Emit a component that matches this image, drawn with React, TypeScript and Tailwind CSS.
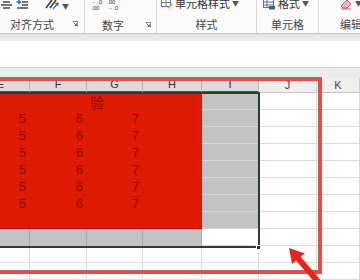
import React from "react";

const cjk = "font-['Noto_Sans_CJK_SC','Noto_Sans',sans-serif]";
const latin = "font-['Liberation_Sans','Noto_Sans_CJK_SC',sans-serif]";

interface colInterface {
  label: string;
  w: string;
  active: boolean;
}

const cols: colInterface[] = [
  { label: "E", w: "w-[30px]", active: true },
  { label: "F", w: "w-[57px]", active: true },
  { label: "G", w: "w-[56px]", active: true },
  { label: "H", w: "w-[59px]", active: true },
  { label: "I", w: "w-[57px]", active: true },
  { label: "J", w: "w-[58px]", active: false },
  { label: "K", w: "w-[43px]", active: false },
];

const Launcher = () => (
  <svg width="6" height="6" viewBox="0 0 6 6" className="shrink-0">
    <path d="M0.5 0.5 H5.5 V5.5" fill="none" stroke="#8a8a8a" strokeWidth="1" />
    <path d="M1.5 1.5 L4.5 4.5 M2.5 4.5 H4.5 V2.5" fill="none" stroke="#6b6b6b" strokeWidth="1" />
  </svg>
);

const Caret = () => <span className="text-[7px] text-[#555] leading-none">▼</span>;

// ribbon groups, cut at the top like the screenshot
const Ribbon = () => {
  return (
    <div className={`h-[33px] bg-[#fbfbfb] flex overflow-hidden ${cjk}`}>
      {/* 对齐方式 */}
      <div className="w-[85px] shrink-0 border-r border-[#dadada] flex flex-col">
        <div className="h-[16px] -mt-[5px] flex items-center gap-[3px]">
          <svg width="13" height="12" viewBox="0 0 13 12">
            <path d="M1 2 H12 M3 5 H10 M1 8 H12 M3 11 H10" stroke="#4a4a4a" strokeWidth="1.3" />
          </svg>
          <svg width="13" height="12" viewBox="0 0 13 12">
            <path d="M6 2 H12 M6 5 H12 M6 8 H12 M1 11 H12" stroke="#4a4a4a" strokeWidth="1.3" />
            <path d="M0.5 5 H4 M2.5 3 L4.5 5 L2.5 7" fill="none" stroke="#2f6db5" strokeWidth="1.3" />
          </svg>
          <div className="ml-[12px] flex items-end gap-[2px]">
            <svg width="16" height="13" viewBox="0 0 16 13">
              <path d="M2 11 L8 3" stroke="#3a3a3a" strokeWidth="1.6" />
              <path d="M6 11 L12 3" stroke="#3a3a3a" strokeWidth="1.6" />
              <path d="M9 12 L14 6 M14 6 L11 6.5 M14 6 L13.8 9" fill="none" stroke="#2f6db5" strokeWidth="1.2" />
            </svg>
            <Caret />
          </div>
        </div>
        <div className="flex-1 flex items-center pt-[4px] pl-[10px] pr-[6px] justify-between">
          <span className="text-[11px] text-[#444] leading-none">对齐方式</span>
          <Launcher />
        </div>
      </div>

      {/* 数字 */}
      <div className="w-[72px] shrink-0 border-r border-[#dadada] flex flex-col">
        <div className={`h-[16px] -mt-[3px] flex items-center gap-[5px] pl-[6px] ${latin}`}>
          <div className="flex flex-col text-[6px] leading-[6px] text-[#333]">
            <span><span className="text-[#2f6db5]">←</span>.0</span>
            <span>.00</span>
          </div>
          <div className="flex flex-col text-[6px] leading-[6px] text-[#333]">
            <span>.00</span>
            <span><span className="text-[#2f6db5]">→</span>.0</span>
          </div>
        </div>
        <div className="flex-1 flex items-center pt-[4px] pl-[17px] pr-[5px] justify-between">
          <span className="text-[11px] text-[#444] leading-none">数字</span>
          <Launcher />
        </div>
      </div>

      {/* 样式 */}
      <div className="w-[100px] shrink-0 border-r border-[#dadada] flex flex-col">
        <div className="h-[16px] -mt-[5px] flex items-center gap-[2px] pl-[4px]">
          <svg width="12" height="12" viewBox="0 0 12 12">
            <rect x="0.5" y="1.5" width="9" height="8" fill="#fff" stroke="#5a7fb5" />
            <path d="M0.5 5.5 H9.5 M5 1.5 V9.5" stroke="#5a7fb5" />
            <path d="M7 11 L11 7" stroke="#e8a23a" strokeWidth="2" />
          </svg>
          <span className="text-[11px] text-[#333] leading-none">单元格样式</span>
          <Caret />
        </div>
        <div className="flex-1 flex items-center justify-center pt-[4px]">
          <span className="text-[11px] text-[#444] leading-none">样式</span>
        </div>
      </div>

      {/* 单元格 */}
      <div className="w-[62px] shrink-0 border-r border-[#dadada] flex flex-col">
        <div className="h-[16px] -mt-[5px] flex items-center gap-[2px] pl-[6px]">
          <svg width="13" height="13" viewBox="0 0 13 13">
            <rect x="0.5" y="1.5" width="10" height="9" fill="#fff" stroke="#5a6f8f" />
            <path d="M0.5 5 H10.5 M0.5 8 H10.5 M4 1.5 V10.5" stroke="#5a6f8f" />
            <rect x="6" y="9" width="6" height="3.5" fill="#3f5f8f" />
          </svg>
          <span className="text-[11px] text-[#333] leading-none">格式</span>
          <Caret />
        </div>
        <div className="flex-1 flex items-center justify-center pt-[4px]">
          <span className="text-[11px] text-[#444] leading-none">单元格</span>
        </div>
      </div>

      {/* 编辑 */}
      <div className="w-[60px] shrink-0 flex flex-col">
        <div className="h-[16px] -mt-[5px] flex items-center gap-[2px] pl-[20px]">
          <svg width="14" height="13" viewBox="0 0 14 13">
            <path d="M2 9 L8 3 L12 7 L8 11 H4 Z" fill="#f3b6c4" stroke="#d0506e" strokeWidth="1" />
            <path d="M2 12 H12" stroke="#d0506e" strokeWidth="1" />
          </svg>
          <Caret />
        </div>
        <div className="flex-1 flex items-center pt-[4px] pl-[21px]">
          <span className="text-[11px] text-[#444] leading-none whitespace-nowrap">编辑</span>
        </div>
      </div>
    </div>
  );
};

const HeaderRow = () => (
  <div className={`h-[15px] flex ${latin}`}>
    {cols.map((c, i) => (
      <div
        key={c.label}
        className={`${c.w} shrink-0 flex items-center text-[11px] leading-none border-r ${
          c.active
            ? "bg-[#dcdcdc] text-[#333] border-[#b8b8b8] border-b-2 border-b-[#3c5a48]"
            : "bg-[#efefef] text-[#444] border-[#cfcfcf] border-b border-b-[#c4c4c4]"
        } ${i === 0 ? "justify-end pr-[25px]" : "justify-center"}`}
      >
        {c.label}
      </div>
    ))}
  </div>
);

const Cell = (props: { w: string; kind: "red" | "gray" | "white"; text?: string }) => {
  const style =
    props.kind === "red"
      ? "bg-[#df1a02] border-[#df1a02]"
      : props.kind === "gray"
      ? "bg-[#c3c3c3] border-[#d6d6d6]"
      : "bg-white border-[#dadada]";
  return (
    <div
      className={`${props.w} shrink-0 h-full border-r border-b ${style} flex items-center justify-end pr-[3px] text-[13px] text-[#8e0b0b] leading-none`}
    >
      {props.text}
    </div>
  );
};

const Sheet = () => {
  const numberRows = [0, 1, 2, 3, 4, 5];
  return (
    <div className={`relative bg-white ${latin}`}>
      <HeaderRow />

      {/* 验 title row, merged over E-H */}
      <div className="h-[17px] flex">
        <div className={`w-[202px] shrink-0 h-full bg-[#df1a02] flex items-center justify-center pr-[8px] text-[14px] text-[#8e0b0b] leading-none ${cjk}`}>
          验
        </div>
        <Cell w="w-[57px]" kind="gray" />
        <Cell w="w-[58px]" kind="white" />
        <Cell w="w-[43px]" kind="white" />
      </div>

      {numberRows.map((r) => (
        <div key={r} className="h-[17px] flex">
          <Cell w="w-[30px]" kind="red" text="5" />
          <Cell w="w-[57px]" kind="red" text="6" />
          <Cell w="w-[56px]" kind="red" text="7" />
          <Cell w="w-[59px]" kind="red" />
          <Cell w="w-[57px]" kind="gray" />
          <Cell w="w-[58px]" kind="white" />
          <Cell w="w-[43px]" kind="white" />
        </div>
      ))}

      <div className="h-[17px] flex">
        <div className="w-[202px] shrink-0 h-full bg-[#df1a02] border-b border-[#b01200]" />
        <Cell w="w-[57px]" kind="gray" />
        <Cell w="w-[58px]" kind="white" />
        <Cell w="w-[43px]" kind="white" />
      </div>

      <div className="h-[17px] flex">
        <div className="w-[30px] shrink-0 h-full bg-[#c3c3c3] border-r border-[#a9a9a9]" />
        <div className="w-[57px] shrink-0 h-full bg-[#c3c3c3] border-r border-[#a9a9a9]" />
        <div className="w-[56px] shrink-0 h-full bg-[#c3c3c3] border-r border-[#a9a9a9]" />
        <div className="w-[59px] shrink-0 h-full bg-[#c3c3c3] border-r border-[#a9a9a9]" />
        <Cell w="w-[57px]" kind="white" />
        <Cell w="w-[58px]" kind="white" />
        <Cell w="w-[43px]" kind="white" />
      </div>

      {[0, 1].map((r) => (
        <div key={r} className="h-[17px] flex">
          {cols.map((c) => (
            <Cell key={c.label} w={c.w} kind="white" />
          ))}
        </div>
      ))}

      {/* selection outline + fill handle */}
      <div className="absolute left-[-6px] top-[14px] w-[266px] h-[156px] border-2 border-[#24432f] pointer-events-none" />
      <div className="absolute left-[256px] top-[167px] w-[5px] h-[5px] bg-[#1c2e22] border border-white pointer-events-none" />
    </div>
  );
};

export default function App() {
  return (
    <div className="relative w-[360px] h-[280px] overflow-hidden bg-white">
      <Ribbon />
      <div className="h-[8px] bg-gradient-to-b from-[#e2e2e2] to-[#efefef] border-t border-[#c9c9c9]" />
      <div className="h-[26px] bg-white" />
      <div className="h-[11px] bg-[#ebebeb] border-t border-[#d3d3d3]" />
      <Sheet />

      {/* red annotation box drawn on the screenshot */}
      <div className="absolute left-[-10px] top-[77px] w-[332px] h-[197px] border-[4px] border-[#d9504c] pointer-events-none" />

      {/* annotation arrow */}
      <svg className="absolute left-[280px] top-[240px] overflow-visible pointer-events-none" width="50" height="50" viewBox="0 0 50 50">
        <polygon
          points="9,8 12,24 16,20.5 35.5,43.5 40,39.5 20.5,16.5 25,13.5"
          fill="#e8241c"
        />
      </svg>
    </div>
  );
}
